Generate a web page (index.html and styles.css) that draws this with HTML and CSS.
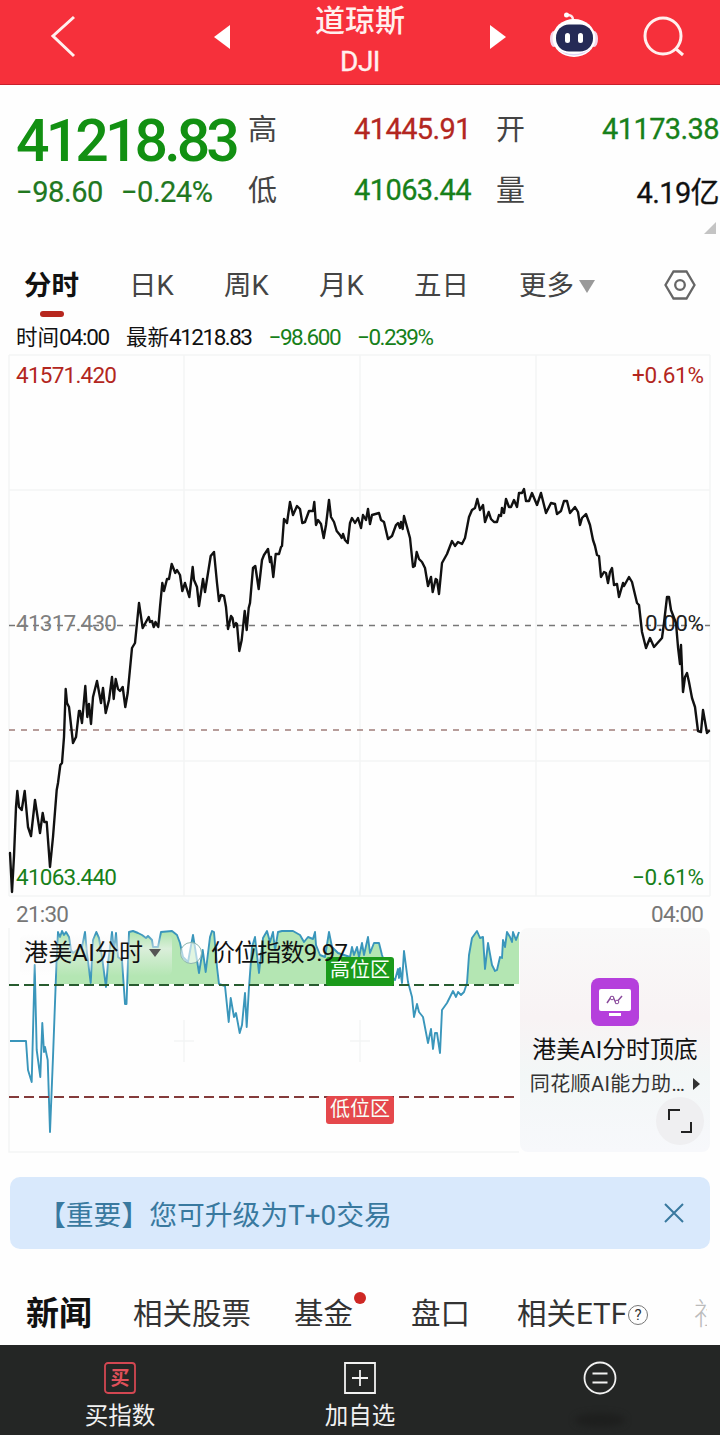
FILE: index.html
```html
<!DOCTYPE html>
<html lang="zh-CN">
<head>
  <meta charset="UTF-8">
  <meta name="viewport" content="width=device-width, initial-scale=1.0">
  <title>道琼斯 DJI</title>
  <link rel="stylesheet" href="styles.css">
</head>
<body>
<header class="header">
  <svg class="back" width="28" height="44" viewBox="0 0 28 44"><path d="M24 2 L3 21 L24 41"/></svg>
  <svg class="arrow" width="16" height="24" viewBox="0 0 16 24"><path d="M16 0 V24 L0 12 Z"/></svg>
  <div class="title">
    <span class="name">道琼斯</span>
    <span class="code">DJI</span>
  </div>
  <svg class="arrow" width="16" height="24" viewBox="0 0 16 24"><path d="M0 0 V24 L16 12 Z"/></svg>
  <svg class="robot" width="50" height="46" viewBox="0 0 50 46">
    <path d="M24 8 C24 4 22 3 17 2.500" fill="none" stroke="#ffe9ee" stroke-width="2.500"/>
    <circle cx="17.500" cy="3" r="2.500" fill="#fff"/>
    <ellipse cx="5" cy="27" rx="4" ry="8" fill="#f3d5e8"/>
    <ellipse cx="45" cy="27" rx="4" ry="8" fill="#f3d5e8"/>
    <ellipse cx="25" cy="26" rx="21.500" ry="19" fill="#fff"/>
    <path d="M7 36 Q25 51 43 36 Q34 42 25 42 Q15 42 7 36" fill="#ddd2f4"/>
    <rect x="7" y="12.500" width="37" height="27" rx="13" fill="#252a56"/>
    <rect x="16" y="21" width="5" height="10" rx="2.500" fill="#fff"/>
    <rect x="29" y="21" width="5" height="10" rx="2.500" fill="#fff"/>
  </svg>
  <svg class="search" width="44" height="44" viewBox="0 0 44 44"><circle cx="21" cy="21" r="18"/><path d="M33.500 33.500 L41 40"/></svg>
</header>

<section class="quote">
  <div class="price">
    <div class="last">41218.83</div>
    <div class="change"><span>−98.60</span><span>−0.24%</span></div>
  </div>
  <dl class="stats">
    <dt>高</dt><dd class="red">41445.91</dd>
    <dt>开</dt><dd class="green">41173.38</dd>
    <dt>低</dt><dd class="green">41063.44</dd>
    <dt>量</dt><dd>4.19亿</dd>
  </dl>
  <i class="corner"></i>
</section>

<nav class="tabs">
  <a class="tab active">分时</a>
  <a class="tab">日K</a>
  <a class="tab">周K</a>
  <a class="tab">月K</a>
  <a class="tab">五日</a>
  <a class="tab more">更多<i class="caret"></i></a>
  <svg class="setting" width="34" height="32" viewBox="0 0 34 32"><path d="M10.500 2.500 H23.500 L31.500 16 L23.500 29.500 H10.500 L2.500 16 Z"/><circle cx="17" cy="16" r="4.800"/></svg>
</nav>

<div class="info">
  <span>时间<em>04:00</em></span>
  <span>最新<em>41218.83</em></span>
  <span class="green"><em>−98.600</em></span>
  <span class="green"><em>−0.239%</em></span>
</div>

<svg class="chart" width="720" height="576" viewBox="0 352 720 576">
  <g class="grid">
    <path d="M9 355 H710 M9 490 H710 M9 761 H710 M9 896 H710"/>
    <path d="M9 355 V896 M184 355 V896 M360 355 V896 M536 355 V896 M710 355 V896"/>
  </g>
  <path class="dash" d="M9 625.500 H710"/>
  <path class="dash now" d="M9 730 H710"/>
  <text class="gray" x="16" y="631" textLength="101">41317.430</text>
  <text class="green" x="16" y="885" textLength="101">41063.440</text>
  <text class="red" x="16" y="383" textLength="101">41571.420</text>
  <text class="red" x="632" y="383" textLength="72">+0.61%</text>
  <text class="black" x="645" y="631" textLength="59">0.00%</text>
  <text class="green" x="632" y="885" textLength="72">−0.61%</text>
  <text class="time" x="16" y="922" textLength="53">21:30</text>
  <text class="time" x="651" y="922" textLength="53">04:00</text>
  <polyline class="line" points="10,853 12,892 14,856 16,807 17.300,791 19,807 21.700,810 24.700,791 28,827 31,836 35,800 40,833 42.700,813 44.300,822 46.700,822 50,867 53,837 56.700,790 58,783 60.300,765 62,763 64,737 65.700,689 67,703 69,707 73,743 76,737 79,711 80,711 82,723 85.300,686 87.300,717 89,704 91,724 93,697 97,681 101,703 103,688 105.700,713 109,700 112,677 113.700,699 115.700,679 118,689 120,691 122.700,687 125.300,707 127.700,693 132,648 135,643 139,603 142.700,628 148.700,617 150,622 152,621 153.700,627 155.500,622 158.300,627 160,607 162.300,583 164,591 167,579 169,579 171.700,564 175.300,573 177,570 180,575 182.300,591 185,583 189.300,597 192.700,567 194,580 197,587 199,606 203,579 205,592 210.700,556 214,552 217,583 219,601 221,595 224,596 226,607 228,629 231,616 232.500,618 234,627 236,623 237,624 239.300,651 241.700,640 244.700,611 246.700,630 248.700,608 250,603 253,568 255.300,566 258.700,589 262,560 264,555 268,549 270,562 271,557 273.300,577 275.700,554 279,554 281,547 282,546 284,519 287,523 290,502 293,515 297,506 300,509 302.300,523 305,522 309,511 313,511 314.300,502 316,525 318,520 321,524 323.700,538 326,525 329,500 331,517 334,522 336.700,531 340,535 341.700,538 343,534 345,540 347.700,543 350,523 352,518 355,523 358,518 361,528 363,515 366,520 368,509 370,524 372,515 379,513 381,520 384,522 388,539 392,536 396,525 398,523 400,528 401,522 402.700,529 404,516 407,527 410,538 413,567 414.700,566 416.700,552 419,559 422,562 425,568 428,586 431,577 432.700,592 435.700,579 437,580 439,594 442,563 447,554 452,541 455,546 458,542 462,544 465,538 469,517 472,510 475,508 477.300,499 480,510 483,505 485,522 488.700,512 491,519 494,522 497,522 499,515 501,516 502,508 504,513 506,499 509,507 511,507 514,500 517,507 519,493 522,493 524,489 526,501 529,501 532,493 537,505 541,493 546,513 551,503 555,504 557,514 561,511 564,501 567,501 570,513 575,507 578,512 580,525 582,518 586,514 590,525 593,540 595,546 597,555 599,556 601,577 604,572 606,573 608,583 610,572 612,568 614,585 617,584 619,597 623,583 624,586 629,577 632,582 637,603 639,605 642,632 646,648 650,638 654,647 662,638 664,623 667,597 669,597 671,610 676,623 678,647 680,664 681,645 683,692 685,677 687,673 689,682 692,698 695,707 698,731 701,732 703,710 707,733 709,731"/>
</svg>

<section class="indicator">
  <svg width="520" height="228" viewBox="0 928 520 228">
    <defs>
      <clipPath id="high"><rect x="9" y="928" width="511" height="56"/></clipPath>
      <linearGradient id="fade" x1="0" y1="0" x2="0" y2="1">
        <stop offset="0" stop-color="#f4f4f4" stop-opacity="0"/>
        <stop offset=".35" stop-color="#f4f4f4" stop-opacity=".6"/>
        <stop offset="1" stop-color="#f4f4f4" stop-opacity="0"/>
      </linearGradient>
    </defs>
    <path class="grid" d="M9 928 V1152 H519 M184 1020 V1062 M174 1041 H194 M360 1020 V1062 M350 1041 H370"/>
    <g class="area" clip-path="url(#high)">
      <polygon points="56,984 56.700,957 58,932 60,937 62,931 64,935 66,932 69,937 71,950 73,953 77,950 82,947 85,932 87,953 90.700,983 93,940 96.300,932 99,938 102,957 106,987 108,963 112,932 114,950 116,933 118,957 122,960 125,1004 126.500,1004 129,932 133,931 138,933 142,935 146,938 148,936 152,940 153,947 158,947 161,932 172,931 177,935 180,943 183,957 188,962 193,935 199,973 202.700,950 205.700,972 210,937 212,931 214,932 217,967 219,984"/>
      <polygon points="249,984 252,947 255,937 259,973 263,938 267,931 270,942 273,932 275,950 278,932 282,931 293,931 300,935 304,942 308,937 313,939 315,932 316,945 320,955 325,957 329,932 332,947 338,953 350,957 352,947 354,955 357,947 359,957 362,943 364,955 368,937 370,953 374,943 379,943 382,955 388,973 394,980 394,984"/>
      <polygon points="467,984 469,955 472,938 477,931 480,938 483,937 485,969 488,943 492,965 495,971 497,970 500,957 502,958 503,940 505,947 507,932 510,937 512,942 513,932 516,940 519,932 519,984"/>
    </g>
    <polyline class="ai-line" points="10,1041 26,1041 28,1070 31.700,1082 34.700,965 36.700,1050 40.300,1077 42.300,1023 44,1052 45,1047 47.700,1060 50,1132 53,1057 56.700,957 58,932 60,937 62,931 64,935 66,932 69,937 71,950 73,953 77,950 82,947 85,932 87,953 90.700,983 93,940 96.300,932 99,938 102,957 106,987 108,963 112,932 114,950 116,933 118,957 122,960 125,1004 126.500,1004 129,932 133,931 138,933 142,935 146,938 148,936 152,940 153,947 158,947 161,932 172,931 177,935 180,943 183,957 188,962 193,935 199,973 202.700,950 205.700,972 210,937 212,931 214,932 217,967 219,984 225,986 228.700,1022 230.700,998 234,1017 236,1013 239.700,1033 242,1025 245,993 246.700,1027 249,987 252,947 255,937 259,973 263,938 267,931 270,942 273,932 275,950 278,932 282,931 293,931 300,935 304,942 308,937 313,939 315,932 316,945 320,955 325,957 329,932 332,947 338,953 350,957 352,947 354,955 357,947 359,957 362,943 364,955 368,937 370,953 374,943 379,943 382,955 388,973 395,980 398,969 399,978 400,968 402,983 404,951 408,982 412,997 414,1017 417,1004 419,1012 423,1017 428,1043 431,1029 433,1049 435,1033 437,1033 440,1053 442,1010 447,1003 453,991 456,997 458,992 461,995 464,992 467,983 469,955 472,938 477,931 480,938 483,937 485,969 488,943 492,965 495,971 497,970 500,957 502,958 503,940 505,947 507,932 510,937 512,942 513,932 516,940 519,932"/>
    <rect x="20" y="934" width="152" height="42" rx="6" fill="url(#fade)"/>
    <circle cx="191" cy="953" r="10.500" class="info-dot"/>
    <path class="high-line" d="M9 985 H516"/>
    <path class="low-line" d="M9 1097 H516"/>
    <text class="label" x="24" y="961" textLength="119">港美AI分时</text>
    <path d="M149 949 H161 L155 957 Z" fill="#555"/>
    <rect x="326" y="957" width="68" height="29" rx="3" fill="#1b9a1b"/>
    <text class="badge" x="330" y="977" textLength="60">高位区</text>
    <rect x="326" y="1096" width="68" height="28" rx="3" fill="#e5484c"/>
    <text class="badge" x="330" y="1116" textLength="60">低位区</text>
    <text class="label" x="211" y="961" textLength="137">价位指数9.97</text>
  </svg>
  <aside class="promo">
    <svg width="48" height="48" viewBox="0 0 48 48">
      <rect width="48" height="48" rx="8" fill="#b53fdc"/>
      <rect x="8" y="11" width="32" height="22" rx="2" fill="#fff"/>
      <rect x="18" y="35" width="12" height="3" fill="#fff"/>
      <path d="M16 25 L20 19 L22 19 L25 25 L31 18" fill="none" stroke="#8a4a9c" stroke-width="1.500"/>
      <circle cx="21" cy="20" r="1.800" fill="#fff" stroke="#8a4a9c"/><circle cx="26" cy="24" r="1.800" fill="#fff" stroke="#8a4a9c"/>
    </svg>
    <strong>港美AI分时顶底</strong>
    <span>同花顺AI能力助…<i></i></span>
    <b class="expand"><svg width="26" height="26" viewBox="0 0 26 26"><path d="M2 12 V2 H13 M24 14 V24 H14"/></svg></b>
  </aside>
</section>

<div class="notice">
  <span>【重要】您可升级为T+0交易</span>
  <svg width="20" height="20" viewBox="0 0 20 20"><path d="M1 1 L19 19 M19 1 L1 19"/></svg>
</div>

<nav class="news">
  <a class="active">新闻</a>
  <a>相关股票</a>
  <a class="dot">基金</a>
  <a class="depth">盘口</a>
  <a>相关ETF<i class="help">?</i></a>
  <a class="cut">社区</a>
</nav>

<footer class="footer">
  <a>
    <svg width="34" height="34" viewBox="0 0 34 34"><rect x="2" y="2" width="30" height="30" rx="3" stroke="#d34752"/><text x="17" y="24" text-anchor="middle">买</text></svg>
    <span>买指数</span>
  </a>
  <a>
    <svg width="34" height="34" viewBox="0 0 34 34"><path d="M2 2 H32 V32 H2 Z M17 9 V25 M9 17 H25"/></svg>
    <span>加自选</span>
  </a>
  <a>
    <svg width="34" height="34" viewBox="0 0 34 34"><circle cx="17" cy="17" r="15.500"/><path d="M9.500 12.500 H24.500 M9.500 21.500 H24.500"/></svg>
    <i class="smudge"></i>
  </a>
</footer>
</body>
</html>
```
FILE: styles.css
```css
* {
  box-sizing: border-box;
}

body {
  margin: 0;
  width: 720px;
  height: 1435px;
  overflow: hidden;
  background: #fefefe;
  color: #111;
  font-family: Roboto, "Noto Sans CJK SC", sans-serif;
}

i, b, em {
  font-style: normal;
}

.red { color: #b32620; fill: #b32620; }
.green { color: #17801a; fill: #17801a; }
.gray { fill: #808080; }
.black { fill: #222; }

/* header */
.header {
  display: flex;
  align-items: center;
  height: 85px;
  padding: 0 33px 10px 50px;
  background: #f6303b;
  border-bottom: 1px solid #c8202c;
}

.header svg { flex: none; }

.back, .search {
  fill: none;
  stroke: #fff0ee;
  stroke-width: 3;
}

.back { margin-right: 136px; }
.arrow { fill: #fff; }

.title {
  display: flex;
  flex-direction: column;
  align-items: center;
  width: 260px;
  padding-top: 8px;
  color: #fff0ee;
}

.name { font-size: 30px; line-height: 41px; font-weight: 500; }
.code { font-size: 28px; line-height: 42px; letter-spacing: -.5px; -webkit-text-stroke: .4px; }
.robot { margin-left: 43px; margin-top: -5px; }
.search { margin-left: 43px; }

/* quote */
.quote {
  position: relative;
  display: flex;
  height: 163px;
  padding: 13px 0 0 16px;
}

.price { width: 232px; }

.last {
  font-size: 59px;
  line-height: 85px;
  font-weight: 500;
  letter-spacing: -3.900px;
  color: #129012;
}

.change {
  display: flex;
  gap: 18px;
  font-size: 29px;
  line-height: 18px;
  letter-spacing: -.4px;
  color: #21781f;
  -webkit-text-stroke: .2px;
  white-space: nowrap;
}

.change span + span { letter-spacing: -.5px; }

.stats {
  display: grid;
  grid-template-columns: 44px 180px 44px 204px;
  grid-template-rows: 61px 61px;
  align-items: center;
  margin: 0;
  width: 472px;
  font-size: 29px;
}

.stats dt { color: #444; margin-top: -3px; }
.stats dt:nth-of-type(even) { margin-left: 24px; }
.stats dd { margin: 0; padding-right: 1px; text-align: right; letter-spacing: -.6px; font-size: 29px; -webkit-text-stroke: .3px; }

.corner {
  position: absolute;
  right: 4px;
  bottom: 14px;
  border: 6px solid;
  border-color: transparent #c4c4c4 #c4c4c4 transparent;
}

/* period tabs */
.tabs {
  display: flex;
  height: 72px;
  padding: 17px 0 0 24px;
  font-size: 27.500px;
  line-height: 42px;
  color: #444;
}

.tab { flex: none; width: 95px; padding-left: 8px; }

.tab.active {
  width: 97px;
  padding: 0;
  color: #111;
  font-weight: bold;
}

.tab.active::after {
  content: "";
  display: block;
  width: 24px;
  height: 6px;
  margin: 4px 0 0 16px;
  border-radius: 3px;
  background: #b7271e;
}

.tab.more { display: flex; align-items: center; width: 162px; height: 42px; padding-left: 18px; }
.caret { margin-left: 5px; border: 8px solid transparent; border-top: 13px solid #999; border-bottom: 0; }
.setting { flex: none; margin: 4px 0 0; fill: none; stroke: #666; stroke-width: 2.300; }

.info {
  display: flex;
  gap: 17px;
  height: 32px;
  padding-left: 16px;
  font-size: 21.500px;
  line-height: 34px;
}

.info em { letter-spacing: -1.500px; font-size: 22.500px; }
.info span:first-child em { letter-spacing: -1.200px; }

/* minute chart */
.chart { display: block; font-size: 22.500px; }
.grid { fill: none; stroke: #f3f5f5; stroke-width: 1.500; }
.dash { stroke: #777; stroke-width: 1.300; stroke-dasharray: 6 6; }
.dash.now { stroke: #a07e7a; }
.line { fill: none; stroke: #111; stroke-width: 2.400; stroke-linejoin: round; stroke-linecap: round; }
.time { fill: #777; }

/* indicator */
.indicator { display: flex; height: 249px; }
.indicator > svg { flex: none; }
.area { fill: #b4e6b3; }
.ai-line { fill: none; stroke: #3a96bb; stroke-width: 1.900; stroke-linejoin: round; }
.high-line { stroke: #285c30; stroke-width: 2; stroke-dasharray: 10 5; }
.low-line { stroke: #843b3b; stroke-width: 2; stroke-dasharray: 10 5; }
.info-dot { fill: #fff; fill-opacity: .6; stroke: #8db6ae; }
.label { font-size: 24px; fill: #111; }
.badge { font-size: 20px; fill: #f8fff8; }

.promo {
  position: relative;
  display: flex;
  flex-direction: column;
  align-items: center;
  width: 190px;
  height: 224px;
  padding-top: 50px;
  border-radius: 8px;
  background: linear-gradient(180deg, #f9f9f9 0%, #f8f3f4 40%, #f3f7f7 65%, #f7f8fb 100%);
  white-space: nowrap;
}

.promo strong { margin-top: 6px; font-size: 23.900px; font-weight: normal; line-height: 36px; }
.promo span { display: flex; align-items: center; font-size: 20px; line-height: 32px; letter-spacing: .4px; color: #333; }
.promo span i { margin-left: 8px; border: 6px solid transparent; border-left: 7px solid #333; border-right: 0; }

.expand {
  position: absolute;
  right: 6px;
  bottom: 7px;
  display: flex;
  align-items: center;
  justify-content: center;
  width: 48px;
  height: 48px;
  border-radius: 50%;
  background: #efeff1;
}

.expand path { fill: none; stroke: #222; stroke-width: 2; }

/* notice */
.notice {
  display: flex;
  align-items: center;
  justify-content: space-between;
  height: 72px;
  margin: 0 10px;
  padding: 0 26px 0 28px;
  border-radius: 10px;
  background: #d9e9fc;
  color: #39799f;
  font-size: 27.800px;
}

.notice path { stroke: #39799f; stroke-width: 2; }

/* news tabs */
.news {
  display: flex;
  height: 96px;
  padding: 41px 12px 0 26px;
  overflow: hidden;
  font-size: 29.500px;
  line-height: 48px;
  color: #333;
  white-space: nowrap;
}

.news a { flex: none; margin-right: 43px; }
.news .active { margin-right: 41px; color: #111; font-size: 33px; font-weight: bold; }
.news .dot { position: relative; margin-right: 58px; }
.news .depth { margin-right: 47px; }

.dot::after {
  content: "";
  position: absolute;
  top: 2px;
  right: -13px;
  width: 12px;
  height: 12px;
  border-radius: 50%;
  background: #ce2824;
}

.help {
  display: inline-block;
  width: 20px;
  height: 20px;
  margin-left: 1px;
  border: 1px solid #777;
  border-radius: 50%;
  font-size: 15px;
  line-height: 18px;
  text-align: center;
  vertical-align: 4px;
}

.news .cut { width: 13px; margin: 0 0 0 3px; overflow: hidden; color: #bbb; font-weight: 300; }

/* footer */
.footer {
  display: grid;
  grid-template-columns: repeat(3, 1fr);
  height: 90px;
  background: #242625;
  color: #f1f1f1;
  font-size: 23.500px;
}

.footer a { display: flex; flex-direction: column; align-items: center; padding-top: 16px; }
.footer svg { fill: none; stroke: #f1f1f1; stroke-width: 1.800; }
.footer text { fill: #e0505a; stroke: none; font-size: 19px; font-weight: bold; }
.footer span { margin-top: 4px; line-height: 35px; }
.smudge { width: 50px; height: 14px; margin-top: 18px; border-radius: 50%; background: #1e1f1e; filter: blur(3px); }
```
